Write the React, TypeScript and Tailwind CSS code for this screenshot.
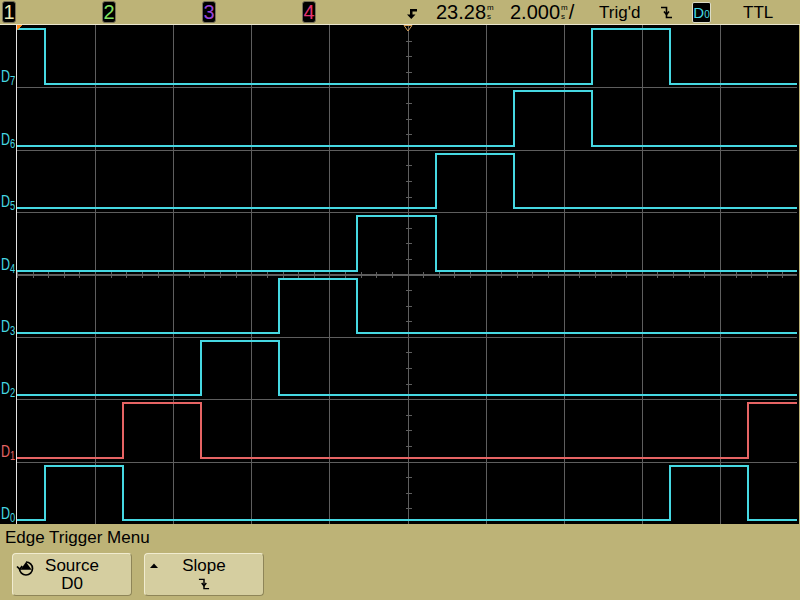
import React from "react"

const CYAN = "#46d8e2"
const RED = "#e66464"
const COL = 78.1
const ROW = 62.375
const FIRST_EDGE = 28
const PLOT_W = 782
const PLOT_H = 499

const channels = [
  { n: 7, color: CYAN },
  { n: 6, color: CYAN },
  { n: 5, color: CYAN },
  { n: 4, color: CYAN },
  { n: 3, color: CYAN },
  { n: 2, color: CYAN },
  { n: 1, color: RED },
  { n: 0, color: CYAN },
]

const scopeChans = [
  { label: "1", color: "text-[#ecebb4]" },
  { label: "2", color: "text-[#84e062]" },
  { label: "3", color: "text-[#9a44d8]" },
  { label: "4", color: "text-[#e43472]" },
]

// each channel is high for one 2ms slot, shifted one slot per bit
function tracePoints(n: number, row: number) {
  const top = ROW * row
  const hi = Math.round(top + 4)
  const lo = Math.round(top + 58.5)
  const pts: string[] = []
  for (let k = -1; k <= 10; k++) {
    const a = Math.max(0, FIRST_EDGE + COL * k)
    const b = Math.min(780, FIRST_EDGE + COL * (k + 1))
    if (b <= a) continue
    const y = (((k - n) % 8) + 8) % 8 === 0 ? hi : lo
    pts.push(`${Math.round(a)},${y}`, `${Math.round(b)},${y}`)
  }
  return pts.join(" ")
}

function Units() {
  return (
    <span className="ml-[1px] inline-flex flex-col text-[8px] leading-[9px]">
      <span>m</span>
      <span>s</span>
    </span>
  )
}

function SlopeIcon({ size = 13 }: { size?: number }) {
  return (
    <svg width={size} height={size} viewBox="0 0 13 13" fill="none" stroke="black" strokeWidth="1.6">
      <path d="M1 1.5H6.5V11.5H12" />
      <path d="M4 5.5L6.5 8.5L9 5.5" />
    </svg>
  )
}

function TopBar() {
  return (
    <div className="flex h-[25px] items-center border-b border-[#ebe7cf] bg-[#bdb377] pl-[2px] text-black">
      <div className="flex w-[400px]">
        {scopeChans.map((c) => (
          <div key={c.label} className="w-[100px]">
            <div
              className={`flex h-[22px] w-[14px] items-center justify-center rounded-[3px] border border-[#77715a] bg-black text-[20px] leading-none ${c.color}`}
            >
              {c.label}
            </div>
          </div>
        ))}
      </div>
      <div className="w-[34px] pl-[2px] pt-[4px]">
        <svg width="14" height="12" viewBox="0 0 14 12">
          <path d="M6 1H13V3.5H8.5V6.5H11.5L7.25 11L3 6.5H6Z" fill="black" />
        </svg>
      </div>
      <div className="flex w-[74px] items-center text-[20px] leading-none">
        23.28
        <Units />
      </div>
      <div className="flex w-[89px] items-center text-[20px] leading-none">
        2.000
        <Units />
        <span className="ml-[1px]">/</span>
      </div>
      <div className="w-[61px] text-[17px] leading-none">Trig'd</div>
      <div className="w-[32px]">
        <SlopeIcon />
      </div>
      <div className="w-[51px]">
        <div className="flex h-[21px] w-[19px] items-center justify-center rounded-[2px] border border-[#dcdcc8] bg-black text-[15px] leading-none text-[#46d8e2]">
          D<sub className="text-[10px]">0</sub>
        </div>
      </div>
      <div className="text-[17px] leading-none">TTL</div>
    </div>
  )
}

function Plot() {
  const vlines = Array.from({ length: 10 }, (_, k) => Math.round(COL * k) + 0.5).slice(1)
  const hlines = Array.from({ length: 8 }, (_, r) => Math.round(ROW * r) + 0.5).slice(1)
  const cx = Math.round(COL * 5) + 0.5
  const cy = Math.round(ROW * 4) - 0.5
  const xticks = Array.from({ length: 50 }, (_, i) => Math.round((COL / 5) * i) + 0.5)
  const yticks = Array.from({ length: 32 }, (_, i) => Math.round((ROW / 4) * i) + 0.5)

  return (
    <svg width={PLOT_W} height={PLOT_H} viewBox={`0 0 ${PLOT_W} ${PLOT_H}`} shapeRendering="crispEdges">
      <g stroke="#5e5e5e" strokeWidth="1">
        {vlines.map((x) => (
          <line key={`v${x}`} x1={x} y1={0} x2={x} y2={PLOT_H} />
        ))}
        {hlines.map((y) => (
          <line key={`h${y}`} x1={0} y1={y} x2={780} y2={y} />
        ))}
        <line x1={0} y1={cy} x2={780} y2={cy} />
        {xticks.map((x) => (
          <line key={`xt${x}`} x1={x} y1={cy - 3} x2={x} y2={cy + 3} />
        ))}
        {yticks.map((y) => (
          <line key={`yt${y}`} x1={cx - 3} y1={y} x2={cx + 3} y2={y} />
        ))}
      </g>
      {channels.map((c, row) => (
        <polyline
          key={c.n}
          points={tracePoints(c.n, row)}
          fill="none"
          stroke={c.color}
          strokeWidth="2"
          strokeLinejoin="miter"
        />
      ))}
      <path d="M0 0H5L0 5Z" fill="#ff8a1c" />
      <path d="M387 0.5H395L391 6Z" fill="none" stroke="#d9a25a" strokeWidth="1" shapeRendering="auto" />
    </svg>
  )
}

function Screen() {
  return (
    <div className="flex h-[499px] bg-black">
      <div className="flex w-[16px] flex-col">
        {channels.map((c) => (
          <div key={c.n} className="flex h-[62.375px] items-end pb-[2px] pl-[1px]">
            <span
              className="inline-block origin-bottom-left scale-x-[0.78] whitespace-nowrap text-[16px] leading-none"
              style={{ color: c.color }}
            >
              D<sub className="text-[12px]">{c.n}</sub>
            </span>
          </div>
        ))}
      </div>
      <div className="w-px bg-[#e4e4e4]" />
      <Plot />
      <div className="w-px bg-[#bdb377]" />
    </div>
  )
}

function SoftKey({ icon, title, value }: { icon: React.ReactNode; title: string; value: React.ReactNode }) {
  return (
    <div className="relative flex h-[43px] w-[120px] flex-col items-center justify-center rounded-[4px] border border-[#f1ecd0] border-b-[#8e8558] border-r-[#8e8558] bg-[#d5cea0] text-[17px] leading-[18px] text-black">
      <div className="absolute left-[3px] top-[5px]">{icon}</div>
      <span>{title}</span>
      <span className="flex h-[18px] items-center">{value}</span>
    </div>
  )
}

function MenuBar() {
  return (
    <div className="h-[76px] bg-[#bdb377] text-black">
      <div className="pl-[5px] pt-[4px] text-[17px] leading-[20px]">Edge Trigger Menu</div>
      <div className="mt-[5px] flex gap-[12px] pl-[12px]">
        <SoftKey
          title="Source"
          value="D0"
          icon={
            <svg width="20" height="20" viewBox="0 0 20 20" fill="none" stroke="black" strokeWidth="1.7">
              <path d="M3.5 9.5A6.5 6.5 0 1 0 10 3" />
              <path d="M1 7.5L3.8 10.2L6.2 7" />
              <path d="M6 10L10 4.5L14 10Z" fill="black" />
            </svg>
          }
        />
        <SoftKey
          title="Slope"
          value={<SlopeIcon size={12} />}
          icon={
            <svg width="12" height="12" viewBox="0 0 12 12">
              <path d="M2 9L6 4.5L10 9Z" fill="black" />
            </svg>
          }
        />
      </div>
    </div>
  )
}

export default function App() {
  return (
    <div className="h-[600px] w-[800px] overflow-hidden bg-[#bdb377] font-['Liberation_Sans',Arial,sans-serif]">
      <TopBar />
      <Screen />
      <MenuBar />
    </div>
  )
}
